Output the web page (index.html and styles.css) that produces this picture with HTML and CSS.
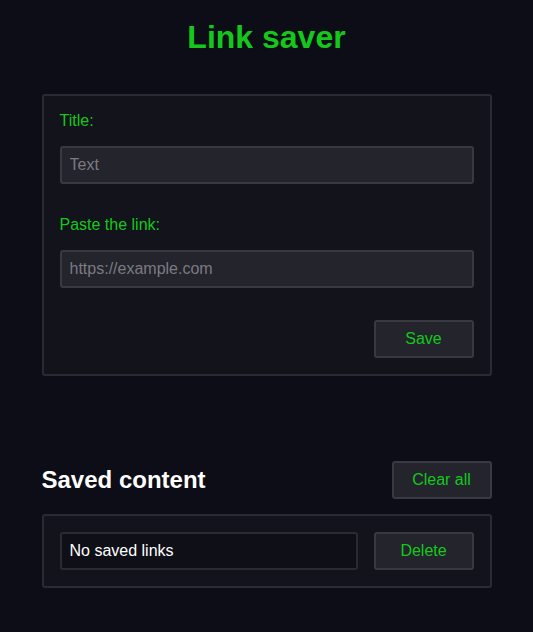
FILE: index.html
```html
<!DOCTYPE html>
<html lang="en">
<head>
<meta charset="utf-8">
<title>Link saver</title>
<link rel="stylesheet" href="styles.css">
</head>
<body>
<main class="page">
  <h1 class="app-title">Link saver</h1>
  <form class="card form-card">
    <label class="field-label" for="title">Title:</label>
    <input class="text-input" id="title" type="text" placeholder="Text">
    <label class="field-label field-label--next" for="link">Paste the link:</label>
    <input class="text-input" id="link" type="text" placeholder="https://example.com">
    <div class="form-actions">
      <button class="btn" type="button">Save</button>
    </div>
  </form>

  <section class="saved">
    <div class="saved-header">
      <h2 class="saved-title">Saved content</h2>
      <button class="btn" type="button">Clear all</button>
    </div>
    <div class="card list-card">
      <div class="link-row">
        <div class="link-item">No saved links</div>
        <button class="btn" type="button">Delete</button>
      </div>
    </div>
  </section>
</main>
</body>
</html>
```

FILE: styles.css
```css
* {
  box-sizing: border-box;
}

html, body {
  margin: 0;
  padding: 0;
  background: #0c0d16;
}

body {
  font-family: "Liberation Sans", Arial, sans-serif;
  font-size: 16px;
  color: #ffffff;
}

.page {
  width: 450px;
  margin: 0 auto;
  padding: 19px 0 40px;
}

.app-title {
  margin: 0 0 38px;
  font-size: 32px;
  font-weight: bold;
  line-height: 37px;
  text-align: center;
  color: #14c81b;
}

.card {
  background: #12131b;
  border: 2px solid #2a2b32;
  border-radius: 3px;
  padding: 16px;
}

.form-card {
  display: flex;
  flex-direction: column;
}

.field-label {
  display: block;
  color: #14c81b;
  font-size: 16px;
  line-height: 18px;
  margin-bottom: 16px;
}

.field-label--next {
  margin-top: 32px;
}

.text-input {
  display: block;
  width: 100%;
  height: 38px;
  padding: 0 8px;
  background: #23242c;
  border: 2px solid #393a41;
  border-radius: 3px;
  color: #ffffff;
  font-family: "Liberation Sans", Arial, sans-serif;
  font-size: 16px;
  outline: none;
}

.text-input::placeholder {
  color: #7b7b82;
}

.form-actions {
  display: flex;
  justify-content: flex-end;
  margin-top: 32px;
}

.btn {
  width: 100px;
  height: 38px;
  background: #23242c;
  border: 2px solid #393a41;
  border-radius: 3px;
  color: #14c81b;
  font-family: "Liberation Sans", Arial, sans-serif;
  font-size: 16px;
  padding: 0;
  cursor: pointer;
}

.saved {
  margin-top: 85px;
}

.saved-header {
  display: flex;
  align-items: center;
  justify-content: space-between;
  margin-bottom: 15px;
}

.saved-title {
  margin: 0;
  font-size: 24px;
  font-weight: bold;
  color: #ffffff;
}

.link-row {
  display: flex;
  align-items: center;
  gap: 16px;
}

.link-item {
  flex: 1;
  height: 38px;
  display: flex;
  align-items: center;
  padding: 0 8px;
  background: #0e0f17;
  border: 2px solid #2a2b32;
  border-radius: 3px;
  color: #ffffff;
  font-size: 16px;
}
```
